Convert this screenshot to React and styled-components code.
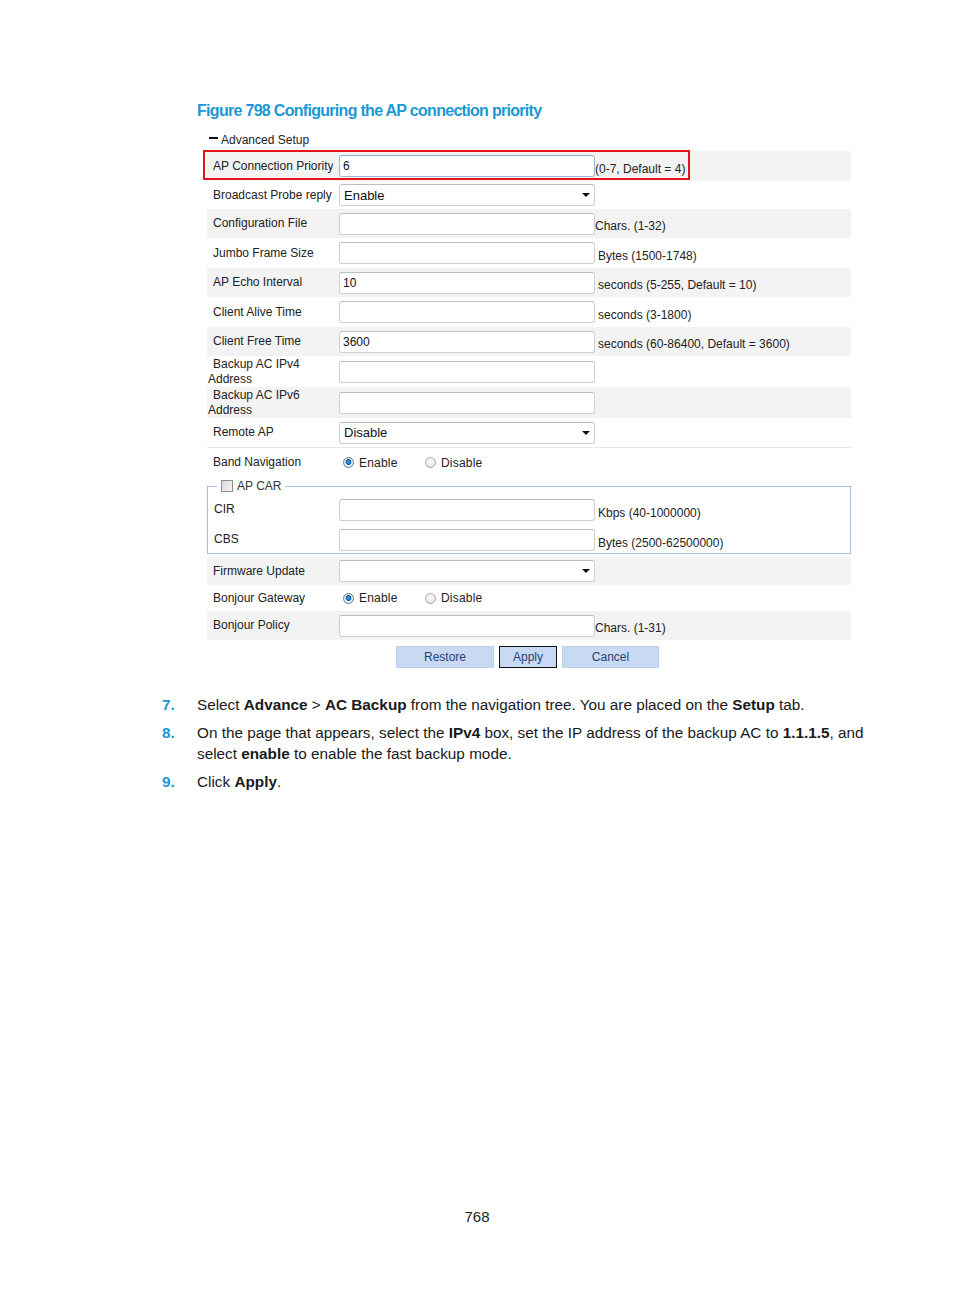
import React from 'react';
import styled, { createGlobalStyle } from 'styled-components';

const Global = createGlobalStyle`
  html, body { margin: 0; padding: 0; background: #fff; }
  body { font-family: "Liberation Sans", Arial, sans-serif; color: #222; }
`;

const Page = styled.div`
  width: 954px;
  height: 1296px;
  display: flex;
  flex-direction: column;
  box-sizing: border-box;
`;

const Title = styled.h2`
  margin: 0;
  padding: 101px 0 0 197px;
  font-family: "Liberation Sans", sans-serif;
  font-size: 16px;
  letter-spacing: -0.7px;
  line-height: 20px;
  font-weight: bold;
  color: #1b98d4;
`;

const Form = styled.div`
  position: relative;
  margin: 10px 0 0 207px;
  width: 644px;
  font-size: 12px;
`;

const Highlight = styled.div`
  position: absolute;
  left: -4px;
  top: 19px;
  width: 487px;
  height: 30px;
  box-sizing: border-box;
  border: 2px solid #e8141c;
  pointer-events: none;
`;

const Header = styled.div`
  height: 20px;
  display: flex;
  align-items: flex-start;
  padding: 2px 0 0 2px;
  box-sizing: border-box;
  line-height: 14px;
  gap: 3px;
`;

const Minus = styled.span`
  display: inline-block;
  width: 9px;
  height: 2px;
  background: #111;
  margin-top: 4px;
`;

const Row = styled.div`
  display: grid;
  grid-template-columns: ${p => p.$labelWidth || 132}px 256px 1fr;
  align-items: center;
  height: ${p => p.$h}px;
  margin-top: ${p => p.$mt || 0}px;
  background: ${p => (p.$gray ? '#f3f3f3' : 'transparent')};
  border-bottom: ${p => (p.$line ? '1px solid #e6e6e6' : 'none')};
  box-sizing: border-box;
`;

const Label = styled.div`
  padding-left: 6px;
  white-space: nowrap;
  overflow: hidden;
  line-height: 15px;
  color: #222;
  margin-right: 6px;
`;

const TwoLine = styled.div`
  padding-left: 1px;
  text-indent: 5px;
  line-height: 15px;
  width: 100px;
`;

const Input = styled.div`
  width: 256px;
  height: 22px;
  box-sizing: border-box;
  border: 1px solid ${p => (p.$focus ? '#9fb7d6' : '#cfcfcf')};
  border-top-color: ${p => (p.$focus ? '#8eabd0' : '#bdbdbd')};
  border-radius: 3px;
  background: #fff;
  padding: 0 3px;
  display: flex;
  align-items: center;
  font-size: 12px;
  color: #111;
`;

const Select = styled(Input)`
  justify-content: space-between;
  padding: 0 4px 0 4px;
  font-size: 13px;
`;

const Arrow = styled.span`
  width: 0;
  height: 0;
  border-left: 4px solid transparent;
  border-right: 4px solid transparent;
  border-top: 4px solid #111;
`;

const Hint = styled.div`
  align-self: end;
  padding: 0 0 ${p => p.$pb ?? 5}px ${p => p.$gap || 0}px;
  line-height: 14px;
  white-space: nowrap;
  color: #222;
`;

const Radios = styled.div`
  display: flex;
  align-items: center;
  padding-left: 4px;
`;

const RadioOption = styled.label`
  display: flex;
  align-items: center;
  gap: 5px;
  width: ${p => p.$w || 'auto'};
  font-size: 12px;
  letter-spacing: 0.2px;
`;

const RadioDot = styled.span`
  width: 11px;
  height: 11px;
  box-sizing: border-box;
  border-radius: 50%;
  border: 1px solid ${p => (p.$on ? '#6f7b86' : '#a9a9a9')};
  background: ${p =>
    p.$on
      ? 'radial-gradient(circle at 50% 45%, #3aa0e0 0, #1565a8 2.6px, #dfe5ea 3.2px, #f4f4f4 100%)'
      : 'radial-gradient(circle at 45% 40%, #fdfdfd 0, #dcdcdc 100%)'};
`;

const Fieldset = styled.fieldset`
  margin: 2px 0 0 0;
  padding: 0;
  border: 1px solid #a9bfe2;
  min-width: 0;
`;

const Legend = styled.legend`
  margin-left: 9px;
  padding: 0 4px;
  display: flex;
  align-items: center;
  gap: 4px;
  line-height: 14px;
  font-size: 12px;
  color: #333;
`;

const Check = styled.span`
  width: 12px;
  height: 12px;
  box-sizing: border-box;
  border: 1px solid #8e8e8e;
  background: linear-gradient(135deg, #d8d8d8, #f6f6f6);
`;

const Buttons = styled.div`
  display: flex;
  gap: 5px;
  padding-left: 189px;
  margin-top: 6px;
`;

const Button = styled.button`
  width: ${p => p.$w}px;
  height: 22px;
  box-sizing: border-box;
  background: #c8daf3;
  border: 1px solid ${p => (p.$active ? '#111' : '#bcd0ec')};
  font-family: "Liberation Sans", Arial, sans-serif;
  font-size: 12px;
  color: #2e3f78;
  padding: 0;
  margin: 0;
`;

const Steps = styled.ol`
  list-style: none;
  margin: 26px 0 0 0;
  padding: 0 0 0 162px;
  display: flex;
  flex-direction: column;
  gap: 7px;
  font-family: "Liberation Sans", sans-serif;
  font-size: 15.3px;
  line-height: 21px;
  color: #1a1a1a;
`;

const Step = styled.li`
  display: grid;
  grid-template-columns: 35px 700px;
`;

const Num = styled.span`
  color: #1b98d4;
  font-weight: bold;
`;

const Lines = styled.div`
  display: flex;
  flex-direction: column;
`;

const Line = styled.div`
  white-space: nowrap;
`;

const B = styled.b`
  font-weight: bold;
`;

const Footer = styled.div`
  margin-top: auto;
  padding-bottom: 70px;
  text-align: center;
  font-size: 15px;
  line-height: 18px;
  color: #222;
`;

function Radio({ on, w, children }) {
  return (
    <RadioOption $w={w}>
      <RadioDot $on={on} />
      {children}
    </RadioOption>
  );
}

function Field({ value, select, focus }) {
  if (select) {
    return (
      <Select>
        <span>{value}</span>
        <Arrow />
      </Select>
    );
  }
  return <Input $focus={focus}>{value}</Input>;
}

export default function App() {
  return (
    <Page>
      <Global />
      <Title>Figure 798 Configuring the AP connection priority</Title>
      <Form>
        <Highlight />
        <Header>
          <Minus />
          <span>Advanced Setup</span>
        </Header>
        <Row $h={30} $gray>
          <Label>AP Connection Priority</Label>
          <Field value="6" focus />
          <Hint>(0-7, Default = 4)</Hint>
        </Row>
        <Row $h={28}>
          <Label>Broadcast Probe reply</Label>
          <Field value="Enable" select />
          <span />
        </Row>
        <Row $h={29} $gray>
          <Label>Configuration File</Label>
          <Field />
          <Hint>Chars. (1-32)</Hint>
        </Row>
        <Row $h={30}>
          <Label>Jumbo Frame Size</Label>
          <Field />
          <Hint $gap={3}>Bytes (1500-1748)</Hint>
        </Row>
        <Row $h={29} $gray>
          <Label>AP Echo Interval</Label>
          <Field value="10" />
          <Hint $gap={3}>seconds (5-255, Default = 10)</Hint>
        </Row>
        <Row $h={30}>
          <Label>Client Alive Time</Label>
          <Field />
          <Hint $gap={3}>seconds (3-1800)</Hint>
        </Row>
        <Row $h={29} $gray>
          <Label>Client Free Time</Label>
          <Field value="3600" />
          <Hint $gap={3}>seconds (60-86400, Default = 3600)</Hint>
        </Row>
        <Row $h={31}>
          <TwoLine>Backup AC IPv4 Address</TwoLine>
          <Field />
          <span />
        </Row>
        <Row $h={31} $gray>
          <TwoLine>Backup AC IPv6 Address</TwoLine>
          <Field />
          <span />
        </Row>
        <Row $h={30} $line>
          <Label>Remote AP</Label>
          <Field value="Disable" select />
          <span />
        </Row>
        <Row $h={29}>
          <Label>Band Navigation</Label>
          <Radios>
            <Radio on w="82px">Enable</Radio>
            <Radio>Disable</Radio>
          </Radios>
          <span />
        </Row>
        <Fieldset>
          <Legend>
            <Check />
            <span>AP CAR</span>
          </Legend>
          <Row $h={33} $labelWidth={131}>
            <Label>CIR</Label>
            <Field />
            <Hint $gap={3} $pb={6}>Kbps (40-1000000)</Hint>
          </Row>
          <Row $h={27} $labelWidth={131}>
            <Label>CBS</Label>
            <Field />
            <Hint $gap={3} $pb={3}>Bytes (2500-62500000)</Hint>
          </Row>
        </Fieldset>
        <Row $h={28} $gray $mt={3}>
          <Label>Firmware Update</Label>
          <Field select />
          <span />
        </Row>
        <Row $h={26}>
          <Label>Bonjour Gateway</Label>
          <Radios>
            <Radio on w="82px">Enable</Radio>
            <Radio>Disable</Radio>
          </Radios>
          <span />
        </Row>
        <Row $h={29} $gray>
          <Label>Bonjour Policy</Label>
          <Field />
          <Hint>Chars. (1-31)</Hint>
        </Row>
        <Buttons>
          <Button $w={98}>Restore</Button>
          <Button $w={58} $active>Apply</Button>
          <Button $w={97}>Cancel</Button>
        </Buttons>
      </Form>
      <Steps>
        <Step>
          <Num>7.</Num>
          <Lines>
            <Line>
              Select <B>Advance</B> &gt; <B>AC Backup</B> from the navigation tree. You are placed on the <B>Setup</B> tab.
            </Line>
          </Lines>
        </Step>
        <Step>
          <Num>8.</Num>
          <Lines>
            <Line>
              On the page that appears, select the <B>IPv4</B> box, set the IP address of the backup AC to <B>1.1.1.5</B>, and
            </Line>
            <Line>
              select <B>enable</B> to enable the fast backup mode.
            </Line>
          </Lines>
        </Step>
        <Step>
          <Num>9.</Num>
          <Lines>
            <Line>
              Click <B>Apply</B>.
            </Line>
          </Lines>
        </Step>
      </Steps>
      <Footer>768</Footer>
    </Page>
  );
}
